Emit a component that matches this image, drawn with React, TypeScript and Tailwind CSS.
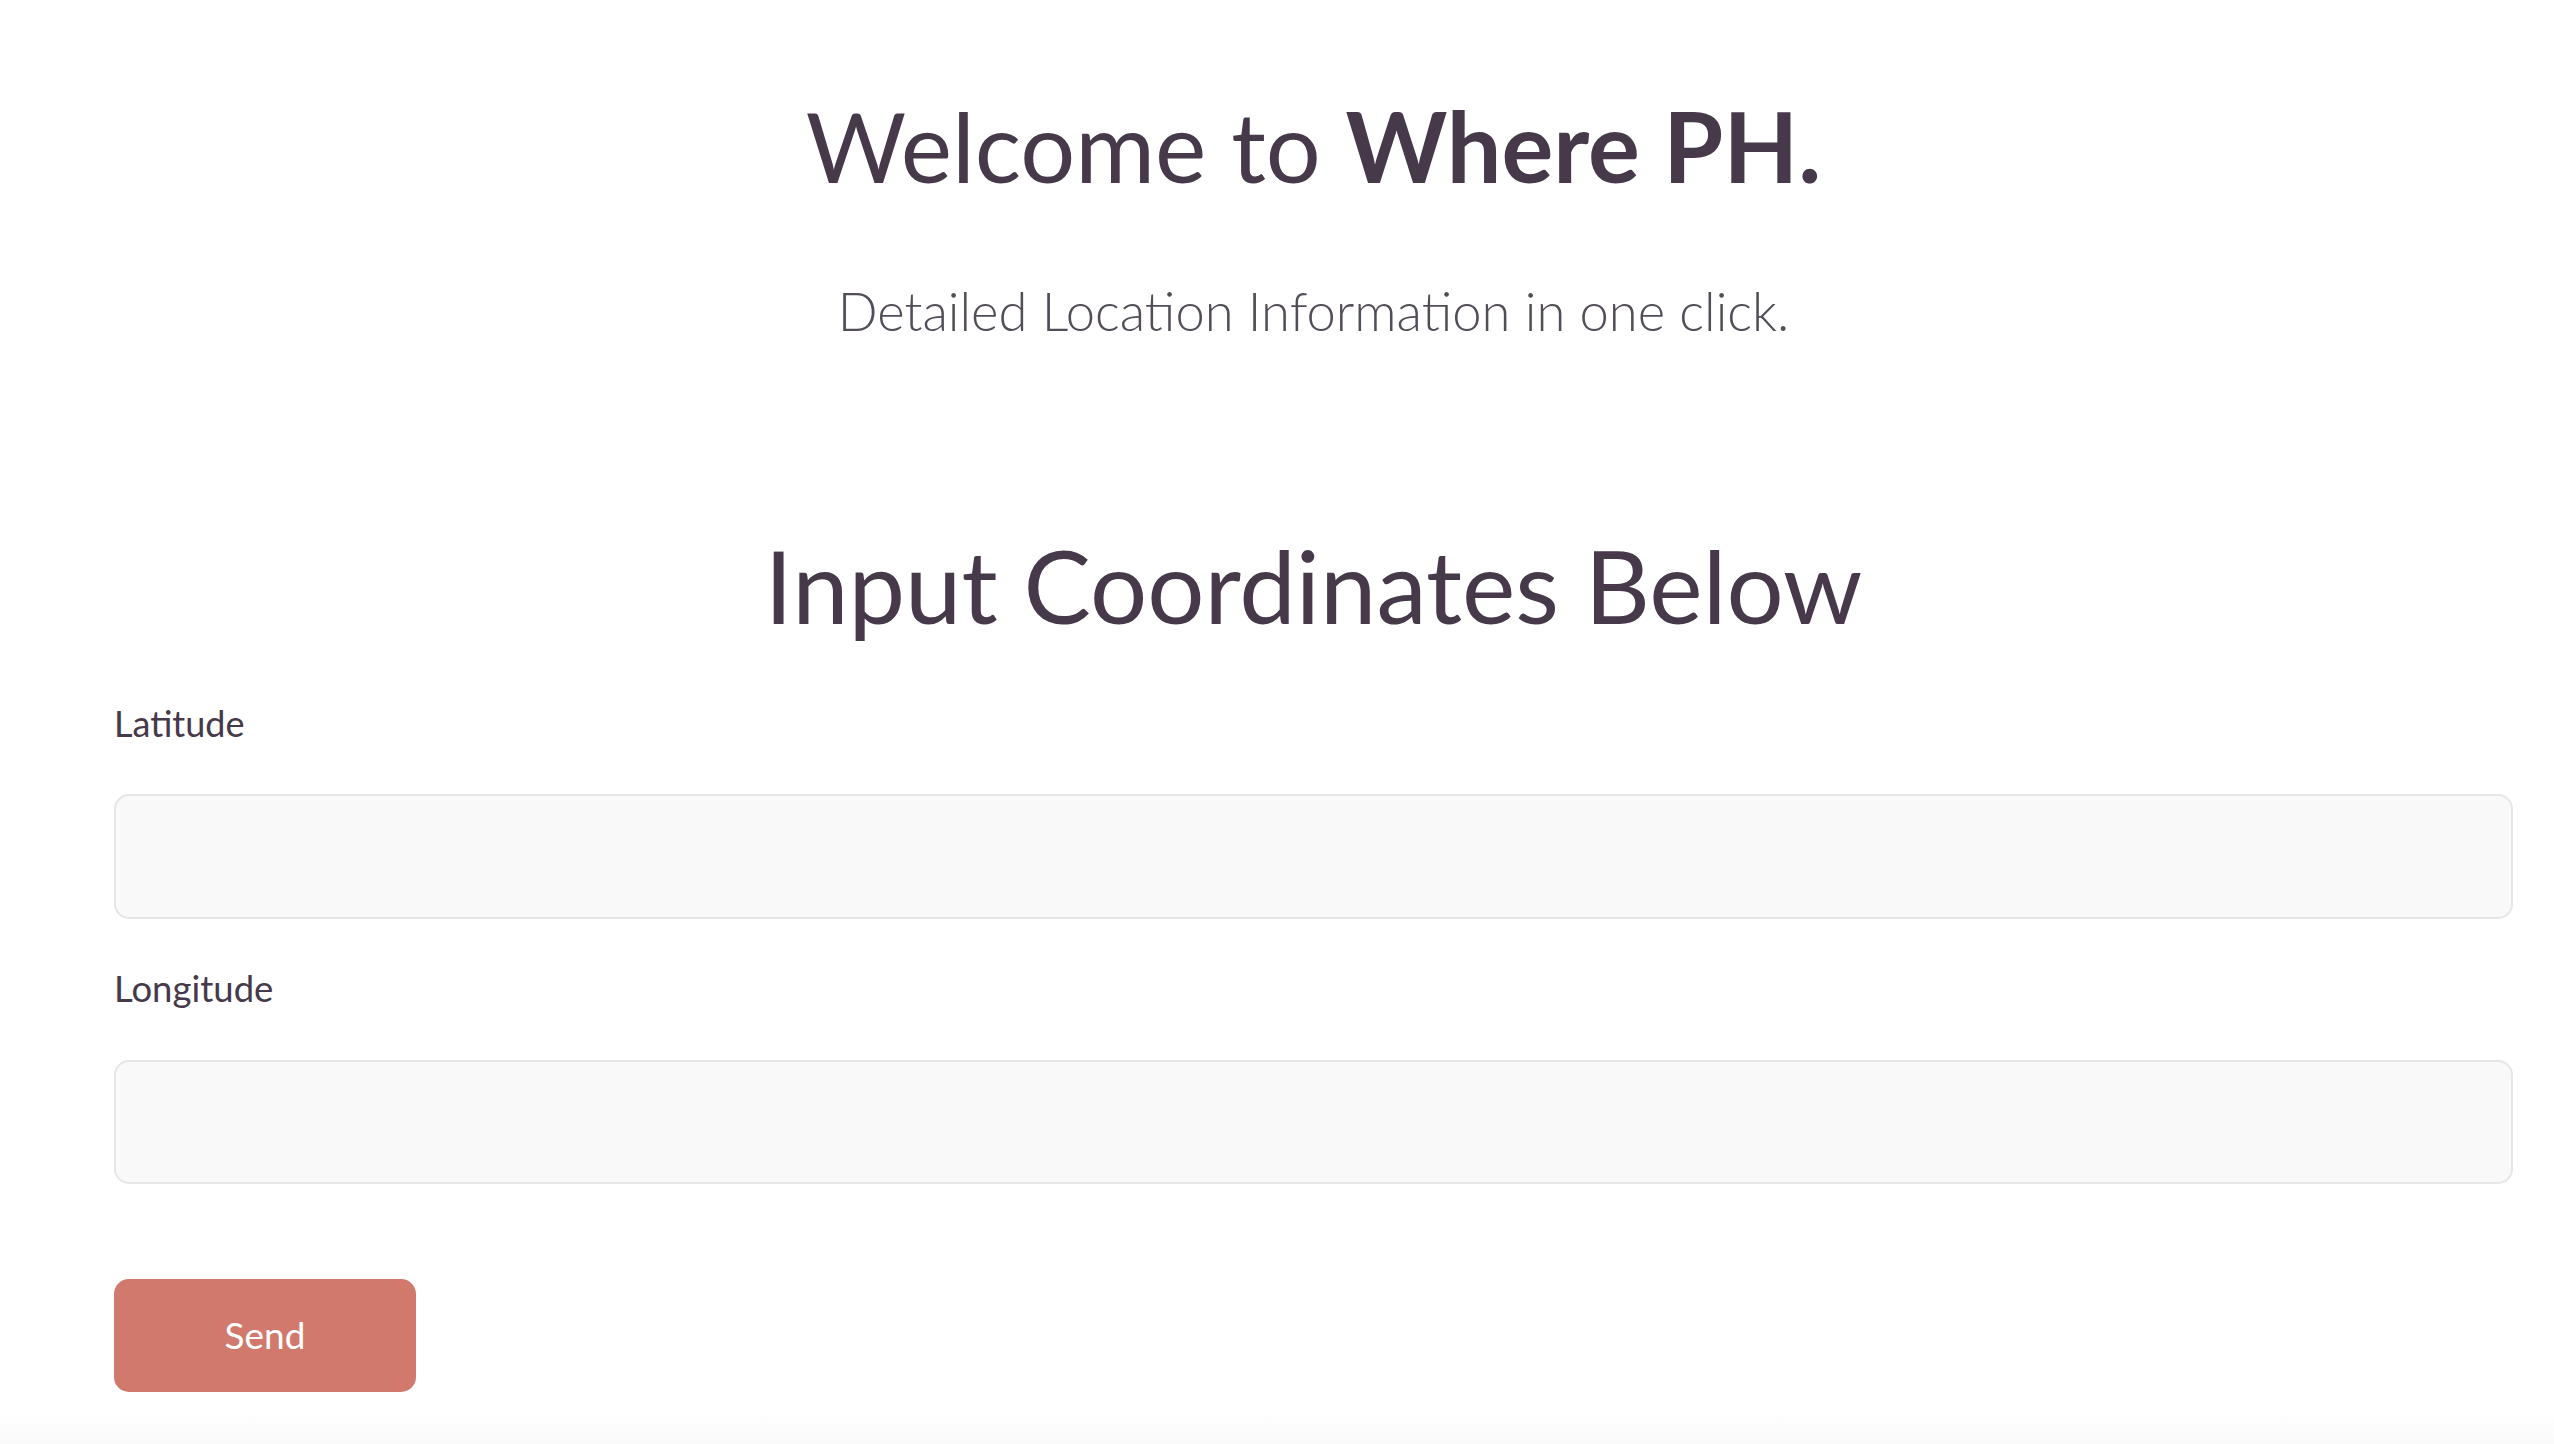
import React from "react";

export default function App() {
  return (
    <div
      className="flex h-[1444px] w-full flex-col bg-white text-[#45394a]"
      style={{ fontFamily: "Lato, 'Noto Sans', sans-serif" }}
    >
      <div className="ml-[114px] flex w-[2399px] flex-col">
        <h1 className="mt-[88px] text-center text-[97px] leading-[1.2] font-normal">
          Welcome to <span className="font-bold">Where PH.</span>
        </h1>
        <p className="mt-[75px] text-center text-[52.5px] leading-[1.2] font-light text-[#524d56]">
          Detailed Location Information in one click.
        </p>
        <h2 className="mt-[183px] text-center text-[101px] leading-[1.2] font-normal">
          Input Coordinates Below
        </h2>
        <label className="mt-[55px] text-[36px] leading-[1.2]">Latitude</label>
        <input
          className="mt-[49px] h-[125px] w-full rounded-[15px] border-2 border-[#e6e6e6] bg-[#f9f9f9] outline-none"
          type="text"
        />
        <label className="mt-[48px] text-[36.5px] leading-[1.2]">Longitude</label>
        <input
          className="mt-[49px] h-[124px] w-full rounded-[15px] border-2 border-[#e6e6e6] bg-[#f9f9f9] outline-none"
          type="text"
        />
        <div className="mt-[95px]">
          <button className="flex h-[113px] w-[302px] items-center justify-center rounded-[15px] bg-[#d0796c] text-[37px] font-normal text-white">
            Send
          </button>
        </div>
      </div>
      <div className="flex-1" />
      <div className="h-[34px] w-full bg-gradient-to-b from-white to-[#fafafa]" />
    </div>
  );
}
